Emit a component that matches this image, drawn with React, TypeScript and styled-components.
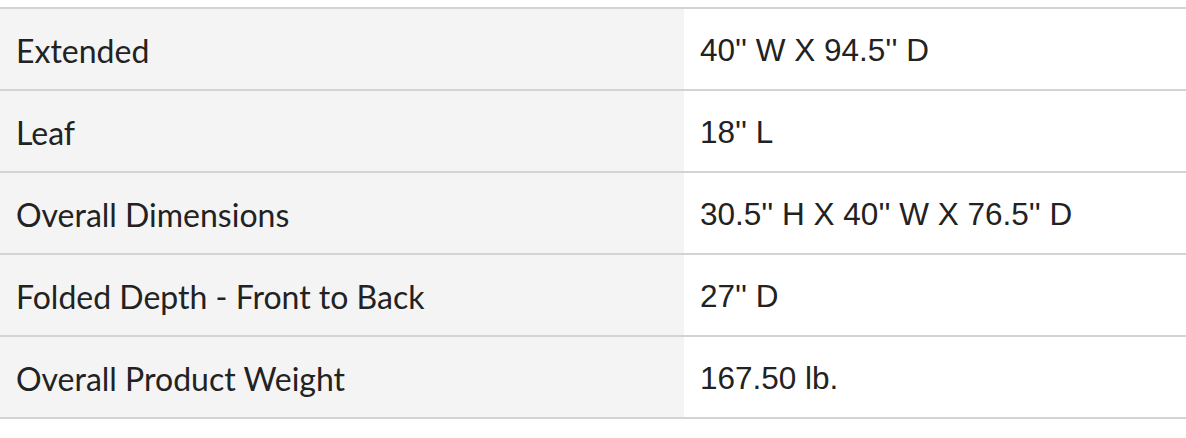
import React from 'react';
import styled, { createGlobalStyle } from 'styled-components';

const GlobalStyle = createGlobalStyle`
  html, body {
    margin: 0;
    padding: 0;
    background: #ffffff;
  }
`;

const Wrapper = styled.div`
  padding-top: 7px;
  width: 1186px;
`;

const SpecTable = styled.table`
  width: 100%;
  border-collapse: collapse;
  border-bottom: 2px solid #d3d2d7;
`;

const Row = styled.tr`
  border-top: 2px solid #d3d2d7;
`;

const Label = styled.th`
  width: 668px;
  height: 77px;
  padding: 3px 0 0 16px;
  box-sizing: content-box;
  background: #f4f4f4;
  text-align: left;
  font-weight: 400;
  font-family: "Lato", "Liberation Sans", sans-serif;
  font-size: 32px;
  color: #222222;
  vertical-align: middle;
`;

const Value = styled.td`
  height: 77px;
  padding: 3px 0 0 16px;
  box-sizing: content-box;
  background: #ffffff;
  font-family: "Liberation Sans", Arial, sans-serif;
  font-size: 31.5px;
  color: #222222;
  vertical-align: middle;
`;

interface ISpec {
    label: string;
    value: string;
}

const specs: Array<ISpec> = [
    { label: 'Extended', value: "40'' W X 94.5'' D" },
    { label: 'Leaf', value: "18'' L" },
    { label: 'Overall Dimensions', value: "30.5'' H X 40'' W X 76.5'' D" },
    { label: 'Folded Depth - Front to Back', value: "27'' D" },
    { label: 'Overall Product Weight', value: '167.50 lb.' },
];

export default function App() {
    return (
        <Wrapper>
            <GlobalStyle />
            <SpecTable>
                <tbody>
                    {specs.map((spec: ISpec, idx: number) => (
                        <Row key={`spec-${idx}`}>
                            <Label scope="row">{spec.label}</Label>
                            <Value>{spec.value}</Value>
                        </Row>
                    ))}
                </tbody>
            </SpecTable>
        </Wrapper>
    );
}
